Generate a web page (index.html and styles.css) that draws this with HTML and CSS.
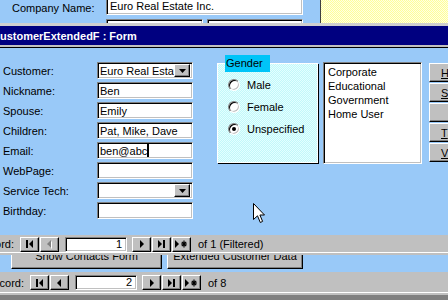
FILE: index.html
```html
<!DOCTYPE html>
<html lang="en">
<head>
    <meta charset="UTF-8">
    <title>CustomerExtendedF : Form</title>
    <link rel="stylesheet" href="styles.css">
</head>
<body>
<div class="screen">

    <!-- form lying behind -->
    <div class="back-form">
        <div class="back-fields">
            <div class="back-row">
                <span class="back-label">Company Name:</span>
                <span class="sunken back-company">Euro Real Estate Inc.</span>
            </div>
            <div class="back-row-2">
                <span class="sunken back-box-a"></span>
                <span class="sunken back-box-b"></span>
            </div>
        </div>
        <div class="back-note"></div>
    </div>

    <div class="window">
        <div class="titlebar"><span class="title-text">CustomerExtendedF : Form</span></div>

        <div class="form-body">
            <div class="fields">
                <div class="row">
                    <span class="label">Customer:</span>
                    <span class="sunken field"><span class="value">Euro Real Estate Inc.</span><span class="drop"><svg width="7" height="4"><path d="M0 0H7L3.5 4Z"/></svg></span></span>
                </div>
                <div class="row">
                    <span class="label">Nickname:</span>
                    <span class="sunken field"><span class="value">Ben</span></span>
                </div>
                <div class="row">
                    <span class="label">Spouse:</span>
                    <span class="sunken field"><span class="value">Emily</span></span>
                </div>
                <div class="row">
                    <span class="label">Children:</span>
                    <span class="sunken field"><span class="value">Pat, Mike, Dave</span></span>
                </div>
                <div class="row">
                    <span class="label">Email:</span>
                    <span class="sunken field"><span class="value">ben@abc</span><span class="caret"></span></span>
                </div>
                <div class="row">
                    <span class="label">WebPage:</span>
                    <span class="sunken field"></span>
                </div>
                <div class="row">
                    <span class="label">Service Tech:</span>
                    <span class="sunken field"><span class="value"></span><span class="drop"><svg width="7" height="4"><path d="M0 0H7L3.5 4Z"/></svg></span></span>
                </div>
                <div class="row">
                    <span class="label">Birthday:</span>
                    <span class="sunken field"></span>
                </div>
            </div>

            <fieldset class="gender">
                <legend>Gender</legend>
                <div class="option"><span class="radio"></span>Male</div>
                <div class="option"><span class="radio"></span>Female</div>
                <div class="option"><span class="radio on"></span>Unspecified</div>
            </fieldset>

            <div class="sunken listbox">
                <div>Corporate</div>
                <div>Educational</div>
                <div>Government</div>
                <div>Home User</div>
            </div>

            <div class="side-buttons">
                <div class="btn side-btn"><u>H</u>elp</div>
                <div class="btn side-btn"><u>S</u>earch</div>
                <div class="btn side-btn"></div>
                <div class="btn side-btn"><u>T</u>asks</div>
                <div class="btn side-btn"><u>V</u>iew</div>
            </div>
        </div>

        <div class="nav nav-sub">
            <span class="nav-label">Record:</span>
            <span class="btn nav-btn"><svg width="9" height="8"><rect x="1" y="0" width="2" height="8"/><path d="M8 0L4 4L8 8Z"/></svg></span>
            <span class="btn nav-btn"><svg width="9" height="9"><path d="M7 1L3 5L7 9Z" fill="#fff"/><path d="M6 0L2 4L6 8Z" fill="#808080"/></svg></span>
            <span class="sunken nav-input">1</span>
            <span class="btn nav-btn nav-gap"><svg width="9" height="8"><path d="M3 0L7 4L3 8Z"/></svg></span>
            <span class="btn nav-btn"><svg width="9" height="8"><path d="M1 0L5 4L1 8Z"/><rect x="6" y="0" width="2" height="8"/></svg></span>
            <span class="btn nav-btn"><svg width="13" height="8"><path d="M0 0L4 4L0 8Z"/><path d="M9 0.5V7.5M6 4H12M6.8 1.8L11.2 6.2M11.2 1.8L6.8 6.2" stroke="#000" stroke-width="1.2"/></svg></span>
            <span class="nav-count">of 1 (Filtered)</span>
        </div>
    </div>

    <div class="under-buttons">
        <div class="btn under-btn show-contacts">Show Contacts Form</div>
        <div class="btn under-btn extended">Extended Customer Data</div>
    </div>

    <div class="nav nav-main">
        <span class="nav-label">Record:</span>
        <span class="btn nav-btn"><svg width="9" height="8"><rect x="1" y="0" width="2" height="8"/><path d="M8 0L4 4L8 8Z"/></svg></span>
        <span class="btn nav-btn"><svg width="9" height="8"><path d="M6 0L2 4L6 8Z"/></svg></span>
        <span class="sunken nav-input">2</span>
        <span class="btn nav-btn nav-gap"><svg width="9" height="8"><path d="M3 0L7 4L3 8Z"/></svg></span>
        <span class="btn nav-btn"><svg width="9" height="8"><path d="M1 0L5 4L1 8Z"/><rect x="6" y="0" width="2" height="8"/></svg></span>
        <span class="btn nav-btn"><svg width="13" height="8"><path d="M0 0L4 4L0 8Z"/><path d="M9 0.5V7.5M6 4H12M6.8 1.8L11.2 6.2M11.2 1.8L6.8 6.2" stroke="#000" stroke-width="1.2"/></svg></span>
        <span class="nav-count">of 8</span>
    </div>

    <div class="status-edge"></div>

    <svg class="cursor" width="13" height="21" viewBox="0 0 13 21"><path d="M0.5 0.5V16.5L4.5 12.8L7.3 19.5L9.6 18.4L6.9 12H11.5Z" fill="#fff" stroke="#000" stroke-width="1"/></svg>
</div>
</body>
</html>
```

FILE: styles.css
```css
* {
    box-sizing: border-box;
}

body {
    margin: 0;
    font-family: "Liberation Sans", Arial, sans-serif;
    font-size: 11px;
    color: #000;
    background: #99c9f8;
}

.screen {
    position: relative;
    width: 448px;
    height: 300px;
    overflow: hidden;
}

/* shared 3D looks */
.sunken {
    background: #fff;
    border: 1px solid;
    border-color: #808080 #fff #fff #808080;
    box-shadow: inset 1px 1px 0 #000, inset -1px -1px 0 #c0c0c0;
}

.btn {
    background: #c0c0c0;
    border: 1px solid;
    border-color: #fff #000 #000 #fff;
    box-shadow: inset -1px -1px 0 #808080;
    display: flex;
    align-items: center;
    justify-content: center;
    white-space: nowrap;
    overflow: hidden;
}

/* form behind the window */
.back-form {
    display: flex;
    height: 23px;
    overflow: hidden;
}

.back-fields {
    width: 320px;
    flex-shrink: 0;
}

.back-row {
    display: flex;
    align-items: flex-end;
    height: 15px;
}

.back-label {
    width: 106px;
    padding-left: 12px;
    align-self: center;
}

.back-company {
    width: 197px;
    height: 18px;
    padding-left: 3px;
    display: flex;
    align-items: center;
    flex-shrink: 0;
}

.back-row-2 {
    display: flex;
    margin-top: 4px;
    padding-left: 106px;
    gap: 4px;
}

.back-box-a {
    width: 97px;
    height: 12px;
}

.back-box-b {
    width: 96px;
    height: 12px;
}

.back-note {
    flex: 1;
    border-left: 1px solid #404040;
    background: repeating-conic-gradient(#ffff99 0 25%, #ffffe4 0 50%) 0 0 / 2px 2px;
}

/* the form window */
.window {
    border-top: 3px solid #cfcfcf;
}

.titlebar {
    height: 21px;
    background: #000080;
    color: #fff;
    font-weight: bold;
    display: flex;
    align-items: center;
    overflow: hidden;
    white-space: nowrap;
    border-bottom: 2px solid #c0c0c0;
}

.title-text {
    margin-left: -8px;
}

.form-body {
    display: flex;
    align-items: flex-start;
    height: 188px;
    border-top: 1px solid #000;
    overflow: hidden;
}

.fields {
    flex-shrink: 0;
    margin-top: 14px;
    padding-left: 3px;
}

.row {
    display: flex;
    align-items: center;
    height: 17px;
    margin-bottom: 3px;
}

.label {
    width: 94px;
}

.field {
    width: 96px;
    height: 17px;
    padding: 2px;
    display: flex;
    align-items: center;
    overflow: hidden;
    white-space: nowrap;
}

.value {
    flex: 1;
    overflow: hidden;
}

.field .value:has(+ .caret) {
    flex: none;
}

.caret {
    width: 2px;
    height: 13px;
    background: #000;
}

.drop {
    flex-shrink: 0;
    width: 16px;
    height: 13px;
    background: #c0c0c0;
    border: 1px solid;
    border-color: #fff #000 #000 #fff;
    box-shadow: inset -1px -1px 0 #808080;
    display: flex;
    align-items: center;
    justify-content: center;
}

/* option group */
.gender {
    flex-shrink: 0;
    margin: 7px 0 0 24px;
    width: 101px;
    height: 108px;
    padding: 0 0 0 7px;
    border: 1px solid #fff;
    box-shadow: 1px 1px 0 #000;
    background: repeating-conic-gradient(#c2f8fa 0 25%, #e4ffff 0 50%) 0 0 / 2px 2px;
}

.gender legend {
    background: #00c4f8;
    height: 17px;
    line-height: 17px;
    padding: 0 7px 0 1px;
}

.option {
    display: flex;
    align-items: center;
    gap: 7px;
    height: 16px;
    margin: 5px 0 6px 3px;
}

.radio {
    position: relative;
    width: 12px;
    height: 12px;
    border-radius: 50%;
    border: 1px solid;
    border-color: #808080 #fff #fff #808080;
    background: #fff;
    box-shadow: inset 1px 1px 0 #000, inset -1px -1px 0 #c0c0c0;
}

.radio.on::after {
    content: "";
    position: absolute;
    left: 3px;
    top: 3px;
    width: 4px;
    height: 4px;
    border-radius: 50%;
    background: #000;
}

.listbox {
    flex-shrink: 0;
    margin: 14px 0 0 5px;
    width: 99px;
    height: 102px;
    padding: 2px 0 0 4px;
    line-height: 14px;
}

.side-buttons {
    flex-shrink: 0;
    margin: 15px 0 0 7px;
}

.side-btn {
    width: 40px;
    height: 19px;
    margin-bottom: 1px;
    justify-content: flex-start;
    padding-left: 11px;
}

/* record navigation */
.nav {
    display: flex;
    align-items: center;
    background: #c0c0c0;
    white-space: nowrap;
}

.nav-sub {
    height: 20px;
    border-bottom: 2px solid #c0c0c0;
    box-shadow: inset 0 -1px 0 #fff;
}

.nav-main {
    height: 23px;
    border-bottom: 2px solid #c0c0c0;
    box-shadow: inset 0 -1px 0 #fff;
}

.nav-label {
    display: flex;
    justify-content: flex-end;
    overflow: hidden;
    padding-right: 1px;
    margin-right: 5px;
}

.nav-sub .nav-label {
    width: 15px;
}

.nav-main .nav-label {
    width: 25px;
}

.nav-btn {
    width: 19px;
    height: 15px;
    margin-right: 1px;
}

.nav-input {
    width: 62px;
    height: 15px;
    margin-left: 5px;
    padding-right: 4px;
    text-align: right;
    line-height: 13px;
}

.nav-gap {
    margin-left: 5px;
}

.nav-count {
    margin-left: 6px;
}

.under-buttons {
    display: flex;
    align-items: flex-end;
    gap: 5px;
    height: 17px;
    padding: 0 0 3px 11px;
    overflow: hidden;
}

.under-btn {
    flex-shrink: 0;
    height: 26px;
}

.show-contacts {
    width: 151px;
}

.extended {
    width: 136px;
}

.status-edge {
    height: 5px;
    background: #808080;
}

.cursor {
    position: absolute;
    left: 253px;
    top: 203px;
}
```
